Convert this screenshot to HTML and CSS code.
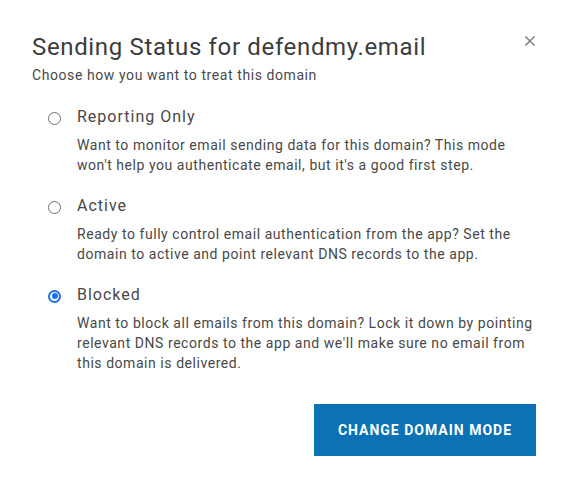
FILE: index.html
```html
<!DOCTYPE html>
<html>
<head>
<meta charset="utf-8">
<link rel="stylesheet" href="styles.css">
</head>
<body>
<div class="dialog">
  <button class="close" aria-label="Close">
    <svg width="10" height="10" viewBox="0 0 10 10"><path d="M1 1L9 9M9 1L1 9" stroke="#8a8a8a" stroke-width="1.6" stroke-linecap="square"/></svg>
  </button>
  <h1 class="title">Sending Status for defendmy.email</h1>
  <p class="subtitle">Choose how you want to treat this domain</p>
  <div class="options">
    <div class="option">
      <div class="option-head"><span class="radio"></span><span class="label">Reporting Only</span></div>
      <p class="desc">Want to monitor email sending data for this domain? This mode won't help you authenticate email, but it's a good first step.</p>
    </div>
    <div class="option">
      <div class="option-head"><span class="radio"></span><span class="label">Active</span></div>
      <p class="desc">Ready to fully control email authentication from the app? Set the domain to active and point relevant DNS records to the app.</p>
    </div>
    <div class="option">
      <div class="option-head"><span class="radio checked"></span><span class="label">Blocked</span></div>
      <p class="desc">Want to block all emails from this domain? Lock it down by pointing relevant DNS records to the app and we'll make sure no email from this domain is delivered.</p>
    </div>
  </div>
  <div class="actions">
    <button class="primary">CHANGE DOMAIN MODE</button>
  </div>
</div>
</body>
</html>
```
FILE: styles.css
```css
html, body {
  margin: 0;
  padding: 0;
  background: #ffffff;
}
body {
  font-family: Roboto, "Liberation Sans", Arial, sans-serif;
  color: #333;
}
.dialog {
  position: relative;
  width: 571px;
  height: 489px;
  box-sizing: border-box;
  padding: 31px 35px 0 32px;
}
.close {
  position: absolute;
  top: 36px;
  left: 525px;
  width: 10px;
  height: 10px;
  padding: 0;
  border: 0;
  background: none;
  display: flex;
}
.title {
  margin: 0;
  font-size: 24px;
  line-height: 32px;
  font-weight: 400;
  color: #3c3c3c;
  letter-spacing: 0.65px;
}
.subtitle {
  margin: 2px 0 0;
  font-size: 14px;
  line-height: 20px;
  color: #4a4a4a;
  letter-spacing: 0.58px;
}
.options {
  display: flex;
  flex-direction: column;
  gap: 18px;
  margin-top: 19px;
  padding-left: 16px;
}
.option-head {
  display: flex;
  align-items: center;
  height: 24px;
}
.radio {
  width: 13px;
  height: 13px;
  box-sizing: border-box;
  border: 1px solid #707070;
  border-radius: 50%;
  margin: 4px 16px 0 0;
  flex: none;
  position: relative;
}
.radio.checked {
  border: 2px solid #1a73e8;
}
.radio.checked::after {
  content: "";
  position: absolute;
  left: 1.5px;
  top: 1.5px;
  width: 6px;
  height: 6px;
  border-radius: 50%;
  background: #1a73e8;
}
.label {
  font-size: 16px;
  letter-spacing: 1px;
  color: #484848;
}
.desc {
  margin: 7px -8px 0 29px;
  font-size: 14px;
  line-height: 20px;
  letter-spacing: 0.55px;
  color: #484848;
}
.actions {
  display: flex;
  justify-content: flex-end;
  margin-top: 31px;
}
.primary {
  width: 222px;
  height: 52px;
  flex: none;
  border: 0;
  background: #0b72b4;
  color: #fff;
  font-family: Roboto, "Liberation Sans", Arial, sans-serif;
  font-weight: 700;
  font-size: 14px;
  letter-spacing: 1px;
  padding: 0;
}
```
